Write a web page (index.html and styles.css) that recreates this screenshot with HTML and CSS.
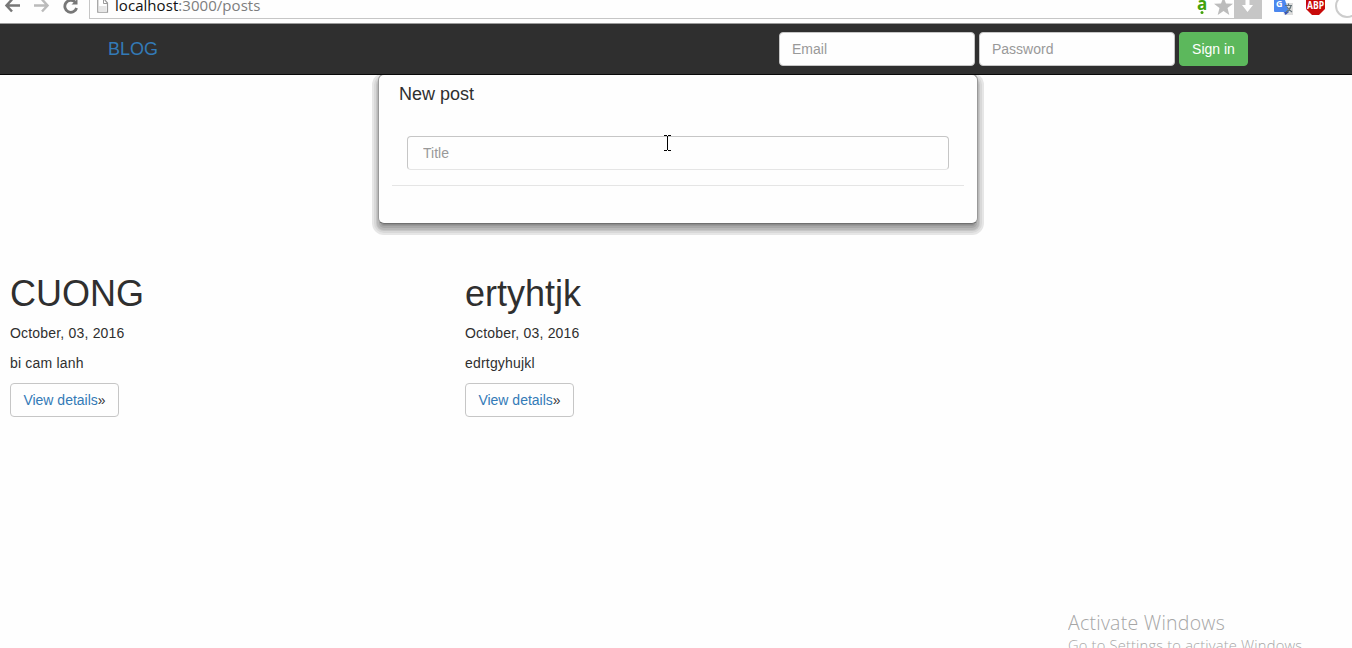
FILE: index.html
```html
<!DOCTYPE html>
<html lang="en">
<head>
<meta charset="utf-8">
<title>Posts</title>
<link rel="stylesheet" href="styles.css">
</head>
<body>
<div class="toolbar">
  <svg class="nav-icons" width="89" height="19" viewBox="0 0 89 19">
    <g fill="none" stroke-width="2.5">
      <path d="M20 5.500H7M12 -.5L6.500 5.500L12 11.500" stroke="#777"/>
      <path d="M34 5.500H47M42 -.5L47.500 5.500L42 11.500" stroke="#bbb"/>
      <path d="M75 2A6 6 0 1 0 76.600 8" stroke="#777" stroke-width="2.800"/>
    </g>
    <path d="M77.500 -1V4.500H71.500Z" fill="#777"/>
  </svg>
  <div class="address">
    <svg class="page-icon" width="12" height="13" viewBox="0 0 12 13">
      <path d="M.75 -3V12.250H10.500V3L7 -1" fill="#fff" stroke="#9b9b9b" stroke-width="1.200"/>
      <path d="M6.500 -1V3.500H10.500" fill="none" stroke="#9b9b9b"/>
      <path d="M2 6H9.500V11.500H2Z" fill="#e6e6e6"/>
    </svg>
    <span class="url"><b>localhost</b>:3000/posts</span>
    <svg class="amark" width="17" height="19" viewBox="0 0 17 19">
      <text x="0" y="9.500">a</text>
      <circle cx="5" cy="12.500" r="1.500"/>
    </svg>
    <svg width="20" height="19" viewBox="0 0 20 19">
      <path d="M9.500 -3L12 3.500L19 3.700L13.500 8L15.300 15L9.500 11L3.700 15L5.500 8L0 3.700L7 3.500Z" fill="#bcbcbc"/>
    </svg>
    <svg width="28" height="19" viewBox="0 0 28 19">
      <path d="M0 0H28V19H0Z" fill="#c6c6c6"/>
      <path d="M11.500 0H15.500V5H19L13.500 12L8 5H11.500Z" fill="#fff"/>
    </svg>
  </div>
  <svg width="90" height="20" viewBox="1262 0 90 20">
    <path d="M1281 3H1293V15H1284Z" fill="#dcdcdc"/>
    <path d="M1274 0H1285L1289 12H1275Q1274 12 1274 11Z" fill="#4b87ee"/>
    <path d="M1284 12H1289L1285.500 15Z" fill="#3653b6"/>
    <text x="1276" y="7" class="gt">G</text>
    <path d="M1285 5.500H1292M1288.500 3.500V5.500M1291 6Q1290 10 1286 12M1287 7Q1289 10 1292 12" fill="none" stroke="#65747a" stroke-width="1.200"/>
    <path d="M1306 0H1325V9L1319 15H1312L1306 9Z" fill="#c80909"/>
    <text x="1307" y="9" class="abp" textLength="17" lengthAdjust="spacingAndGlyphs">ABP</text>
    <circle cx="1347" cy="6" r="11" fill="#fff" stroke="#ccc" stroke-width="2"/>
  </svg>
</div>
<nav class="navbar">
  <a class="brand">BLOG</a>
  <form class="login">
    <input class="field" type="text" placeholder="Email">
    <input class="field" type="password" placeholder="Password">
    <button class="signin" type="button">Sign in</button>
  </form>
</nav>
<main class="page">
  <section class="card">
    <h4 class="card-title">New post</h4>
    <input class="field title-field" type="text" placeholder="Title">
    <div class="divider"></div>
  </section>
  <div class="posts">
    <article class="post">
      <h1>CUONG</h1>
      <p>October, 03, 2016</p>
      <p>bi cam lanh</p>
      <button class="details" type="button"><a>View details</a>»</button>
    </article>
    <article class="post">
      <h1>ertyhtjk</h1>
      <p>October, 03, 2016</p>
      <p>edrtgyhujkl</p>
      <button class="details" type="button"><a>View details</a>»</button>
    </article>
  </div>
</main>
<svg class="cursor" width="7" height="17" viewBox="0 0 7 17">
  <path d="M0 .5H3M4 .5H7M3.500 1V15M0 15.500H3M4 15.500H7" stroke="#000" fill="none"/>
</svg>
<div class="watermark">
  <div class="wm-title">Activate Windows</div>
  <div class="wm-text">Go to Settings to activate Windows.</div>
</div>
</body>
</html>
```
FILE: styles.css
```css
* { box-sizing: border-box; }
body {
  margin: 0;
  height: 648px;
  overflow: hidden;
  background: #fefefe;
  color: #2f2f2f;
  font: 14px/20px "Liberation Sans", Arial, sans-serif;
}
.toolbar {
  display: flex;
  height: 24px;
  border-bottom: 1px solid #9b9b9b;
}
.toolbar svg { flex: none; display: block; }
.address {
  display: flex;
  width: 1173px;
  height: 19px;
  border-left: 1px solid #c6c6c6;
  border-bottom: 1px solid #c6c6c6;
}
.page-icon { margin: 0 6px 0 7px; }
.url {
  flex: 1;
  font: 15px/10px "Open Sans", sans-serif;
  letter-spacing: .05px;
  color: #7d7d7d;
}
.url b { font-weight: 400; color: #111; }
.amark {
  font: bold 17px "Open Sans", sans-serif;
  fill: #42a20c;
}
.gt { font: bold 9px "Open Sans", sans-serif; fill: #fff; }
.abp { font: bold 10px "Open Sans", sans-serif; fill: #fff; }
.navbar {
  display: flex;
  justify-content: space-between;
  height: 51px;
  padding: 8px 104px 0 108px;
  background: #2f2f2f;
  border-bottom: 1px solid #080808;
}
.brand { font-size: 18px; line-height: 34px; color: #337ab7; }
.login { display: flex; gap: 4px; }
.field {
  width: 196px;
  height: 34px;
  padding: 6px 12px;
  border: 1px solid #c6c6c6;
  border-radius: 4px;
  background: #fefefe;
  font: inherit;
}
.field::placeholder { color: #999; opacity: 1; }
.signin {
  width: 69px;
  height: 34px;
  padding: 0;
  border: 1px solid #5cb85c;
  border-radius: 4px;
  background: #5cb85c;
  color: #fff;
  font: inherit;
}
.page { height: 573px; overflow: hidden; }
.card {
  width: 600px;
  height: 150px;
  margin: -1px 0 0 378px;
  padding: 9px 13px 0 14px;
  border: 1px solid #999;
  border-bottom-color: #707070;
  border-radius: 6px;
  background: #fefefe;
  box-shadow:
    0 5px 0 -4px #8c8c8c,
    0 5px 0 -3px #999,
    0 5px 0 -1px #a8a8a8,
    0 5px 0 1px #b8b8b8,
    0 5px 0 2px #c6c6c6,
    0 5px 0 4px #d8d8d8,
    0 5px 0 6px #e6e6e6;
}
.card-title { margin: 0 0 0 6px; font-size: 18px; font-weight: 400; }
.title-field {
  display: block;
  width: 542px;
  margin: 32px 0 15px 14px;
  padding-left: 15px;
  border-bottom-color: #e5e5e5;
}
.divider { height: 1px; margin-left: -1px; background: #e5e5e5; }
.posts { display: flex; padding: 50px 0 0 10px; }
.post { width: 455px; }
.post h1 { margin: 0 0 9px; font-size: 36px; line-height: 40px; font-weight: 400; }
.post p { margin: 0 0 10px; letter-spacing: .19px; }
.details {
  display: block;
  width: 109px;
  height: 34px;
  padding: 0;
  border: 1px solid #c6c6c6;
  border-radius: 4px;
  background: #fefefe;
  color: #333;
  font: inherit;
}
.details a { color: #337ab7; }
.cursor { position: absolute; left: 664px; top: 135px; }
.watermark {
  position: absolute;
  left: 1068px;
  top: 610px;
  height: 38px;
  overflow: hidden;
  color: #a6a6a6;
  font-family: "Open Sans", sans-serif;
  font-weight: 300;
  white-space: nowrap;
}
.wm-title { font-size: 19.5px; line-height: 26px; letter-spacing: .25px; }
.wm-text { font-size: 14.7px; line-height: 19px; letter-spacing: .18px; }
```
